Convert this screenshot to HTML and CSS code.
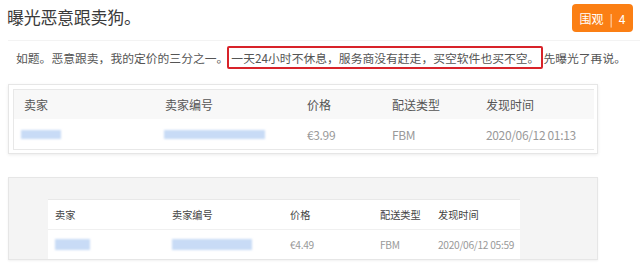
FILE: index.html
```html
<!DOCTYPE html>
<html lang="zh-CN">
<head>
<meta charset="utf-8">
<link rel="stylesheet" href="styles.css">
</head>
<body>
<header class="top">
  <h1 class="title">曝光恶意跟卖狗。</h1>
  <button class="watch">围观<span class="sep">|</span>4</button>
</header>
<main class="post">
  <p class="text">如题。恶意跟卖，我的定价的三分之一。<span class="mark">一天24小时不休息，服务商没有赶走，买空软件也买不空。</span>先曝光了再说。</p>

  <div class="shot shot1">
    <div class="tbl t1">
      <div class="row head">
        <span>卖家</span><span>卖家编号</span><span>价格</span><span>配送类型</span><span>发现时间</span>
      </div>
      <div class="row body">
        <span><i class="blur b1"></i></span><span><i class="blur b2"></i></span><span>€3.99</span><span>FBM</span><span>2020/06/12 01:13</span>
      </div>
    </div>
  </div>

  <div class="shot shot2">
    <div class="tbl t2">
      <div class="row head">
        <span>卖家</span><span>卖家编号</span><span>价格</span><span>配送类型</span><span>发现时间</span>
      </div>
      <div class="row body">
        <span><i class="blur b3"></i></span><span><i class="blur b4"></i></span><span>€4.49</span><span>FBM</span><span>2020/06/12 05:59</span>
      </div>
    </div>
  </div>
</main>
</body>
</html>
```

FILE: styles.css
```css
* { box-sizing: border-box; }
body {
  margin: 0;
  width: 640px;
  height: 273px;
  overflow: hidden;
  background: #fff;
  font-family: "Noto Sans CJK SC", "Liberation Sans", sans-serif;
  color: #333;
}
.top {
  display: flex;
  justify-content: space-between;
  align-items: flex-start;
  height: 40px;
  padding: 4px 7px 0 7px;
}
.title {
  margin: 0;
  font-size: 17px;
  line-height: 26px;
  font-weight: normal;
  color: #3a3a3a;
  letter-spacing: -0.3px;
}
.watch {
  width: 61px;
  height: 28px;
  border: 0;
  border-radius: 4px;
  background: #fb7f14;
  color: #fff;
  font-family: "Noto Sans CJK SC", sans-serif;
  font-size: 12px;
  padding: 0;
  display: flex;
  align-items: center;
  justify-content: center;
}
.sep { margin: 0 6px; opacity: .8; }
.post {
  border-top: 1px solid #f3f3f3;
  margin-left: 8px;
  padding-top: 6px;
}
.text {
  margin: 0 0 0 8px;
  font-size: 11.8px;
  line-height: 21px;
  color: #555;
  white-space: nowrap;
}
.mark {
  border: 2px solid #d8232a;
  border-radius: 2px;
  padding: 1px 2px 1px 2px;
  margin-left: -1px;
}
.shot {
  width: 590px;
  border: 1px solid #e6e6e6;
}
.shot1 {
  margin-top: 16px;
  padding: 4px 3px 3px 4px;
  box-shadow: 0 1px 3px rgba(0,0,0,.08);
}
.shot2 {
  margin-top: 23px;
  height: 83px;
  background: #f4f4f4;
  padding: 21px 0 0 39px;
  box-shadow: 0 1px 2px rgba(0,0,0,.06);
}
.tbl { background: #fff; }
.t1 { border: 1px solid #e8e8e8; border-right: 0; }
.t2 { width: 472px; border-top: 1px solid #e8e8e8; }
.row { display: flex; align-items: center; }
.row span { flex: none; }
.t1 .row { padding-left: 10px; font-size: 12px; }
.t1 .head { height: 29px; background: #f8f8f8; color: #555; }
.t1 .body { height: 30px; color: #9a9a9a; letter-spacing: -0.35px; }
.t1 .row span:nth-child(1) { width: 141px; }
.t1 .row span:nth-child(2) { width: 142px; }
.t1 .row span:nth-child(3) { width: 85px; }
.t1 .row span:nth-child(4) { width: 94px; }
.t2 .row { padding-left: 7px; font-size: 10.2px; }
.t2 .head { height: 30px; color: #444; border-bottom: 1px solid #f0f0f0; }
.t2 .body { height: 29px; color: #9a9a9a; letter-spacing: -0.3px; }
.t2 .row span:nth-child(1) { width: 117px; }
.t2 .row span:nth-child(2) { width: 118px; }
.t2 .row span:nth-child(3) { width: 90px; }
.t2 .row span:nth-child(4) { width: 58px; }
.blur {
  display: block;
  height: 9px;
  background: #c8dbf6;
  filter: blur(1px);
}
.b1 { width: 40px; margin-left: -3px; }
.b2 { width: 101px; margin-left: -1px; }
.b3 { width: 35px; height: 11px; }
.b4 { width: 80px; height: 11px; }
```
